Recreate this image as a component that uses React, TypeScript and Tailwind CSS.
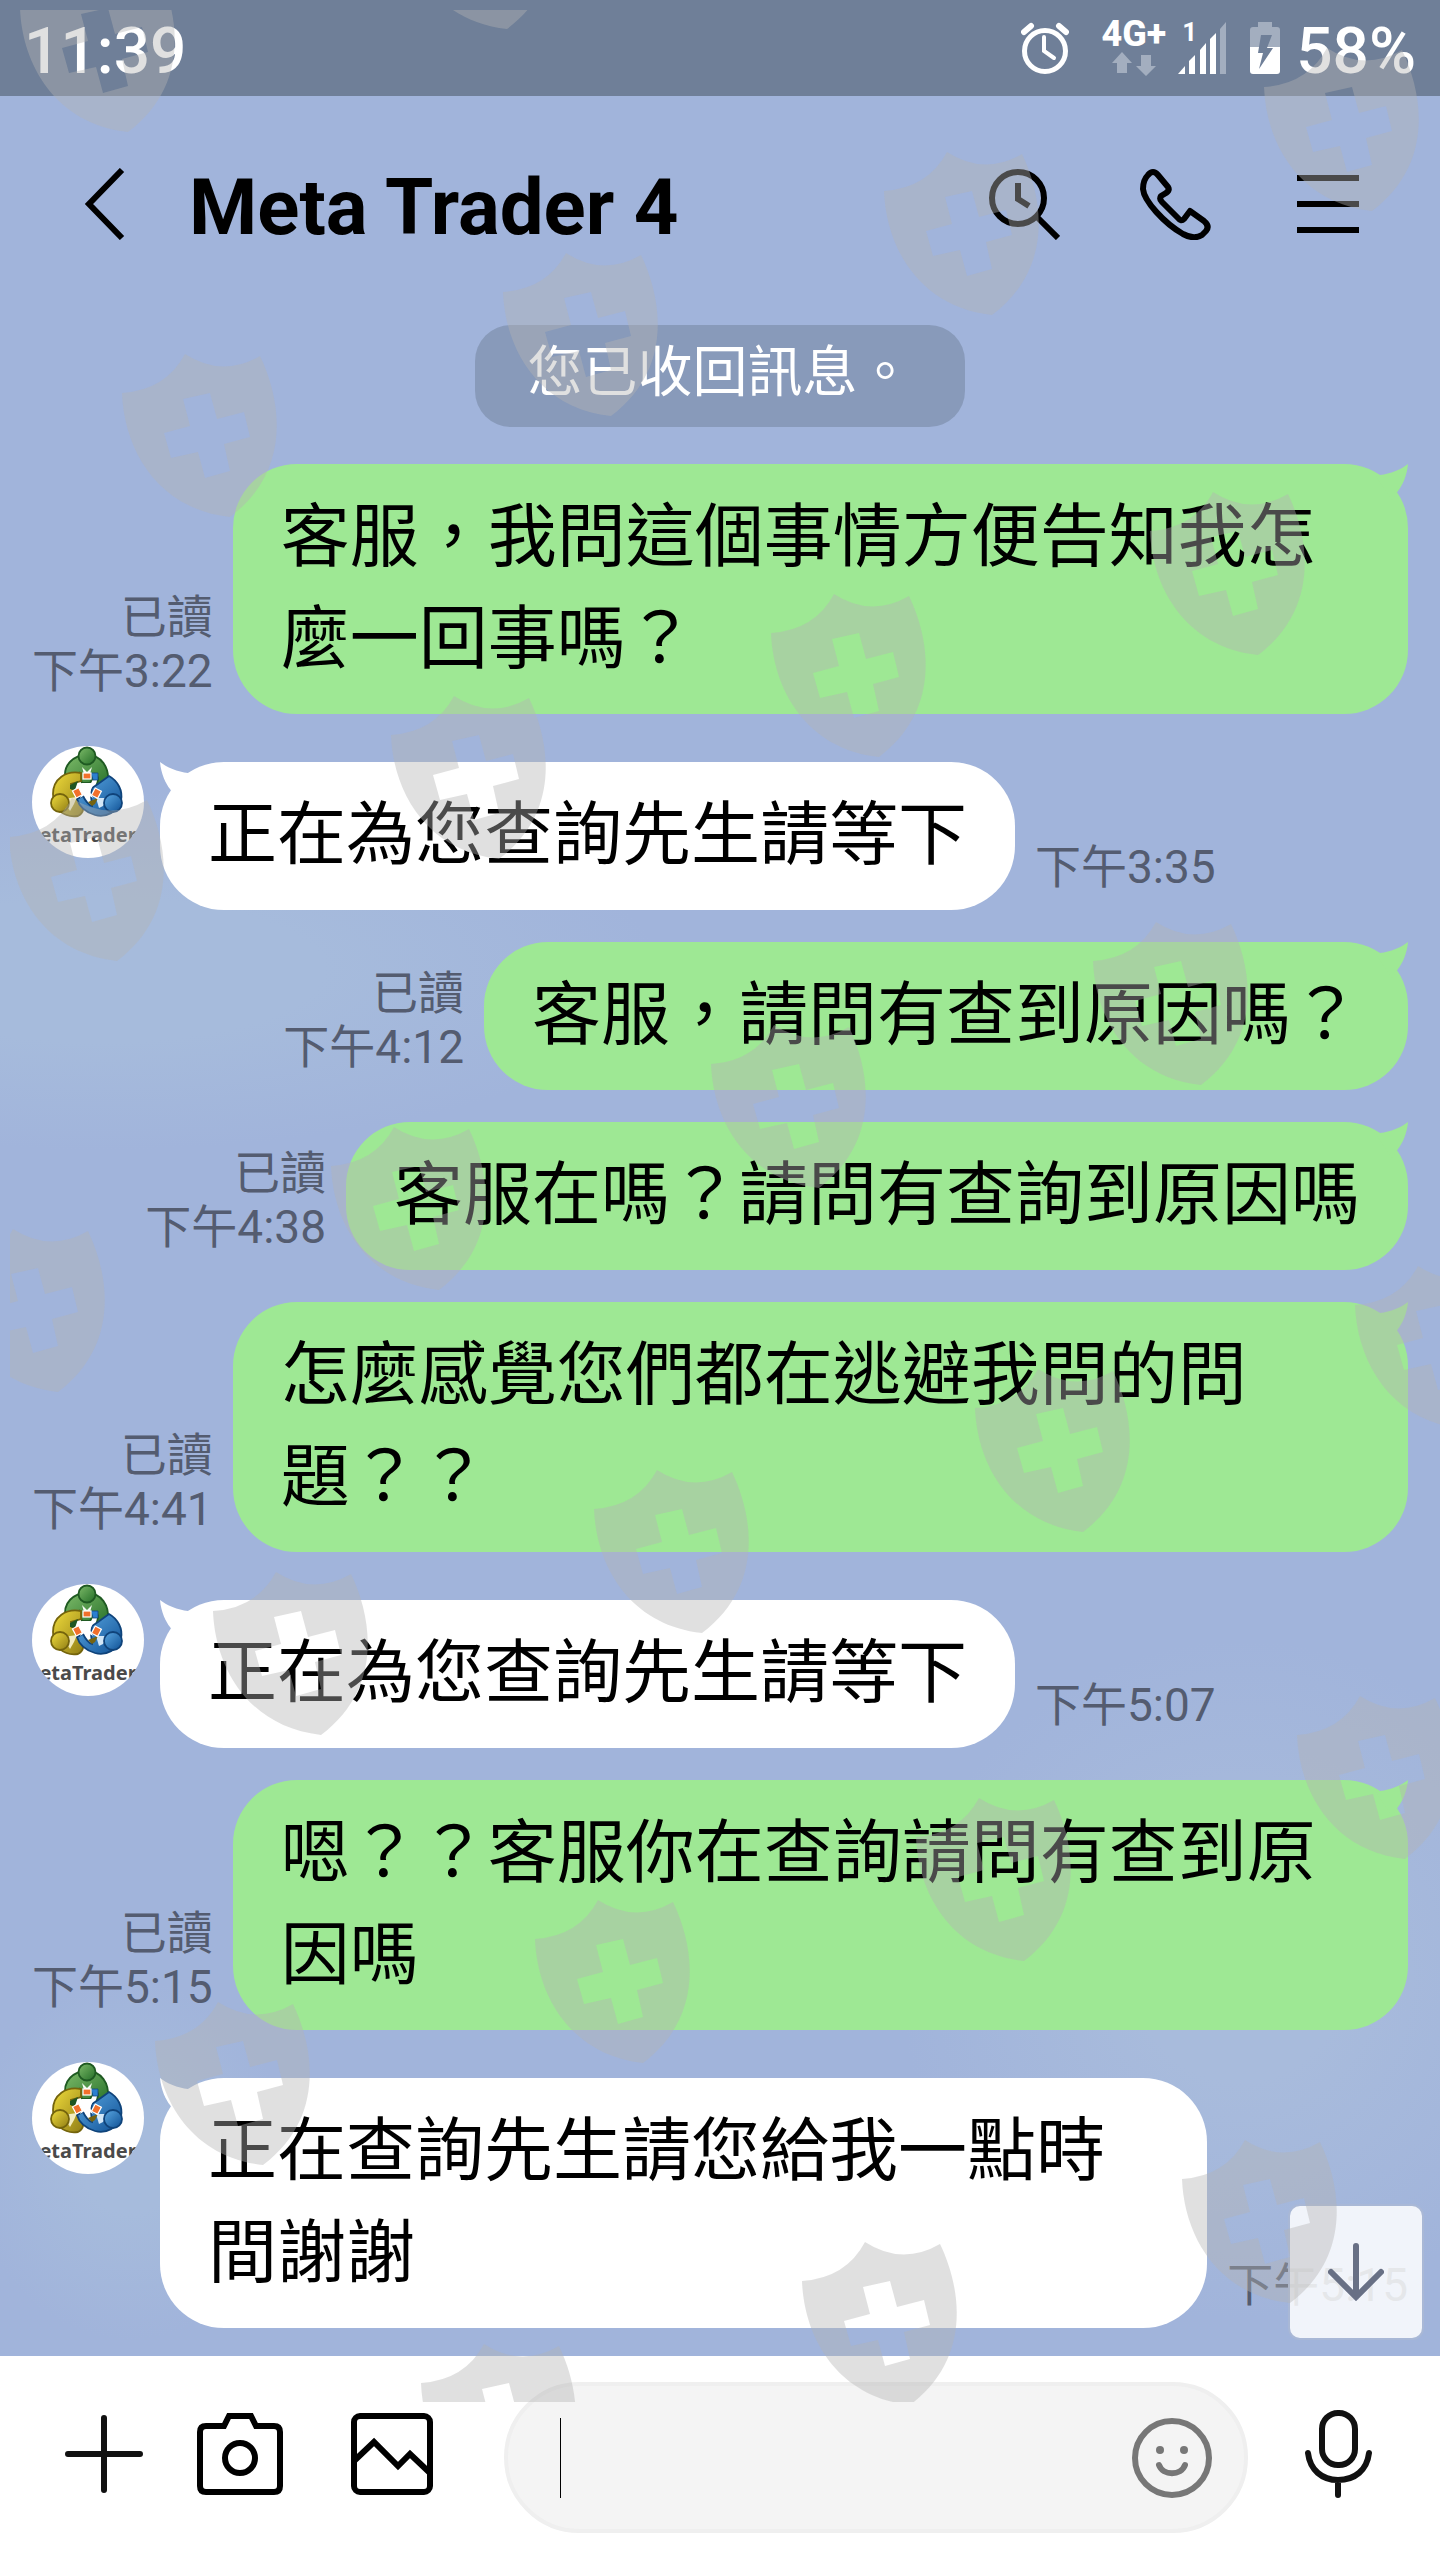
import { useState } from "react";

type Message = {
  id: number;
  mine: boolean;
  text: string;
  time: string;
};

const messages: Message[] = [
  { id: 1, mine: true, text: "客服，我問這個事情方便告知我怎麼一回事嗎？", time: "下午3:22" },
  { id: 2, mine: false, text: "正在為您查詢先生請等下", time: "下午3:35" },
  { id: 3, mine: true, text: "客服，請問有查到原因嗎？", time: "下午4:12" },
  { id: 4, mine: true, text: "客服在嗎？請問有查詢到原因嗎", time: "下午4:38" },
  { id: 5, mine: true, text: "怎麼感覺您們都在逃避我問的問題？？", time: "下午4:41" },
  { id: 6, mine: false, text: "正在為您查詢先生請等下", time: "下午5:07" },
  { id: 7, mine: true, text: "嗯？？客服你在查詢請問有查到原因嗎", time: "下午5:15" },
  { id: 8, mine: false, text: "正在查詢先生請您給我一點時間謝謝", time: "下午5:15" },
];

// top-left corner of every shield stamp
const shields = [
  [20, -31], [399, -134],
  [122, 354], [503, 253], [884, 152], [1264, 48],
  [9, 798], [391, 696], [771, 594], [1150, 492],
  [-50, 1229], [331, 1127], [711, 1025], [1093, 922],
  [213, 1572], [594, 1470], [975, 1369], [1355, 1266],
  [155, 2002], [535, 1900], [916, 1798], [1297, 1696],
  [421, 2344], [802, 2242], [1182, 2140],
];

function Watermark() {
  return (
    <div className="pointer-events-none absolute top-[10px] right-0 bottom-[160px] left-[10px] overflow-hidden" aria-hidden="true">
      <svg className="size-full" fill="#b3b3b3" fillOpacity="0.41" fillRule="evenodd">
        {shields.map(([x, y]) => (
          <path
            key={`${x}-${y}`}
            transform={`translate(${x - 10} ${y - 10})`}
            d="M0 39Q44 36 63 0Q100 24 138 2C161 50 168 118 108 163C35 155 2 95 0 39ZM61 45L88 39L95 65L122 58L128 83L102 90L108 117L83 124L76 98L49 104L42 79L68 72Z"
          />
        ))}
      </svg>
    </div>
  );
}

function Avatar() {
  return (
    <div className="size-28 shrink-0 overflow-hidden rounded-full bg-white">
      <svg viewBox="0 0 112 112" className="size-full">
        <defs>
          <linearGradient id="green" x1="0" y1="0" x2="1" y2="1">
            <stop offset="0" stopColor="#7dbb69" />
            <stop offset="1" stopColor="#236d27" />
          </linearGradient>
          <linearGradient id="yellow" x1="0" y1="0" x2="1" y2="1">
            <stop offset="0" stopColor="#f0dc3c" />
            <stop offset="1" stopColor="#8f7c14" />
          </linearGradient>
          <linearGradient id="blue" x1="0" y1="0" x2="1" y2="1">
            <stop offset="0" stopColor="#5ba8e2" />
            <stop offset="1" stopColor="#0e4f94" />
          </linearGradient>
        </defs>
        <g strokeWidth="1.8">
          <path d="M34 36C29 18 43 9 55 9C70 9 77 22 76 35C75 41 73 44 70 45C66 45 63 42 65 38C67 32 66 30 63 28L58 37L50 37L47 27Z" fill="url(#green)" stroke="#1f5a22" />
          <path d="M50 21L55 26L60 21L58 28H52Z" fill="#f4faf2" stroke="none" />
          <path d="M49 27C34 24 21 33 21 48C21 63 32 72 46 70C52 67 53 60 50 50L46 45L40 43L39 38L49 35Z" fill="url(#yellow)" stroke="#74640c" />
          <path d="M31 53L45 51L42 58L38 65Z" fill="#f3ecc0" stroke="none" />
          <path d="M77 30C86 35 91 45 89 54C86 66 74 72 63 69C53 66 47 60 45 53L51 50C54 56 57 59 60 60L59 50L60 42L66 38Z" fill="url(#blue)" stroke="#0f437a" />
          <path d="M64 52L76 52L71 60L67 62Z" fill="#d4e8f8" stroke="none" />
          <path d="M38 39L46 35L43 44L38 43Z" fill="#1f5522" stroke="none" />
          <path d="M56 56L66 52L63 58L60 60Z" fill="#756310" stroke="none" />
          <circle cx="55" cy="10" r="8.5" fill="url(#green)" stroke="#1f5a22" />
          <circle cx="28" cy="57" r="9" fill="url(#yellow)" stroke="#74640c" />
          <circle cx="81" cy="57" r="9" fill="url(#blue)" stroke="#0f437a" />
        </g>
        <path d="M49 37L62 37L58 46L61 52L54 48L48 52L51 45Z" fill="#fff" />
        <path d="M59 27h7v7h-5z" fill="#2b7fd0" stroke="#12477c" strokeWidth="0.8" />
        <g fill="#f2702c" stroke="#fff" strokeWidth="1.2">
          <rect x="51" y="27" width="8" height="6" />
          <rect x="42" y="43" width="7" height="8" transform="rotate(-28 45 47)" />
          <rect x="61" y="43" width="7" height="8" transform="rotate(28 64 47)" />
        </g>
        <text x="56" y="96" textAnchor="middle" fontSize="20" fontWeight="700" fill="#4a4a4a" className="font-['Noto_Sans',sans-serif]">
          etaTrader
        </text>
      </svg>
    </div>
  );
}

function Bubble({ mine, text }: { mine: boolean; text: string }) {
  return (
    <div
      className={`relative min-w-0 rounded-[64px] px-12 py-[23px] text-[69px] leading-[102px] text-black ${
        mine ? "bg-[#9ee894]" : "mt-4 bg-white"
      }`}
    >
      <svg
        viewBox="0 0 32 36"
        className={`absolute top-0 h-9 w-8 ${mine ? "right-0 fill-[#9ee894]" : "left-0 -scale-x-100 fill-white"}`}
      >
        <path d="M32 0C31 12 26 22 22 27L16 36L0 12L4 11C14 10 26 5 32 0Z" />
      </svg>
      <p className="break-all">{text}</p>
    </div>
  );
}

function MessageRow({ message }: { message: Message }) {
  const { mine, text, time } = message;
  return (
    <li className={`flex ${mine ? "justify-end gap-5" : "items-start"}`}>
      {!mine && (
        <div className="mr-4 shrink-0">
          <Avatar />
        </div>
      )}
      {!mine && <Bubble mine={mine} text={text} />}
      <div className={`mb-4 shrink-0 self-end text-[46px] leading-[54px] text-[#545c70] ${mine ? "text-right" : "ml-5"}`}>
        {mine && <p>已讀</p>}
        <p>{time}</p>
      </div>
      {mine && <Bubble mine={mine} text={text} />}
    </li>
  );
}

function StatusBar() {
  return (
    <div className="flex h-24 items-center justify-between bg-[#6f7f98] px-6 text-[64px] leading-none font-medium text-white">
      <span className="pt-2">11:39</span>
      <div className="flex items-center">
        <svg viewBox="0 0 48 52" className="mr-8 h-[52px] w-12" fill="none" stroke="#fff" strokeWidth="5">
          <circle cx="24" cy="29" r="20.5" />
          <path d="M23 15V29L33 36" strokeWidth="4" strokeLinecap="round" />
          <path d="M3 10L10 4M45 10L38 4" strokeWidth="6" strokeLinecap="round" />
        </svg>
        <div className="mr-3 flex flex-col items-center gap-1">
          <span className="text-[36px] leading-7 font-extrabold">4G+</span>
          <svg viewBox="0 0 44 24" className="h-6 w-11" fill="#a3aebf">
            <path d="M10 0L20 11H15V21H5V11H0Z" />
            <path d="M34 24L44 14H39V3H29V14H24Z" />
          </svg>
        </div>
        <div className="relative mr-6">
          <svg viewBox="0 0 48 52" className="h-[52px] w-12" fill="#fff">
            <path d="M0 52L7 44V52Z" />
            <path d="M11 39L17 33V52H11Z" />
            <path d="M22 28L28 21V52H22Z" />
            <path d="M32 17L38 11V52H32Z" />
            <path d="M42 7L48 0V52H42Z" fill="#a3aebf" />
          </svg>
          <span className="absolute top-0 left-1 text-[26px] leading-5 font-bold">1</span>
        </div>
        <svg viewBox="0 0 30 52" className="mr-4 h-[52px] w-[30px]">
          <path d="M8 0H22V5H27Q30 5 30 8V25H0V8Q0 5 3 5H8Z" fill="#a3aebf" />
          <path d="M0 25H30V49Q30 52 27 52H3Q0 52 0 49Z" fill="#fff" />
          <path d="M11 13H22L17 26H23L9 47L13 31H8Z" fill="#6f7f98" />
        </svg>
        <span className="pt-2">58%</span>
      </div>
    </div>
  );
}

function ChatHeader() {
  return (
    <header className="flex items-center px-[81px] pt-[60px] pb-12">
      <button type="button" aria-label="Back" className="mr-16 shrink-0">
        <svg viewBox="0 0 44 72" className="h-[72px] w-11" fill="none" stroke="#000" strokeWidth="6">
          <path d="M41 2L8 36L41 70" />
        </svg>
      </button>
      <h1 className="flex-1 pt-2 text-[78px] leading-[88px] font-bold text-black">Meta Trader 4</h1>
      <div className="flex shrink-0 items-center">
        <button type="button" aria-label="Search" className="mr-20">
          <svg viewBox="0 0 72 72" className="size-[72px]" fill="none" stroke="#000" strokeWidth="6">
            <circle cx="30" cy="30" r="26" />
            <path d="M49 49L70 70" />
            <path d="M30 15V31L41 38" />
          </svg>
        </button>
        <button type="button" aria-label="Call" className="mr-[86px]">
          <svg viewBox="0 0 71 71" className="size-[71px]" fill="none" stroke="#000" strokeWidth="6" strokeLinejoin="round">
            <path d="M8 6Q13 0 18 6L28 18Q30 21 26 24L21 27Q19 30 22 33L38 49Q41 53 44 50L50 42L64 52Q70 57 66 62L62 66Q54 71 43 65C24 54 4 32 3 20Q3 11 8 6Z" />
          </svg>
        </button>
        <button type="button" aria-label="Menu">
          <svg viewBox="0 0 62 58" className="h-[58px] w-[62px]" stroke="#000" strokeWidth="6">
            <path d="M0 3H62M0 29H62M0 55H62" />
          </svg>
        </button>
      </div>
    </header>
  );
}

function Composer() {
  const [draft, setDraft] = useState("");

  return (
    <footer className="flex items-center bg-white pt-[26px] pr-[68px] pb-[29px] pl-[65px]">
      <button type="button" aria-label="Add" className="mr-[54px] shrink-0 pb-2">
        <svg viewBox="0 0 78 78" className="size-[78px]" stroke="#111" strokeWidth="6" strokeLinecap="round">
          <path d="M39 3V75M3 39H75" />
        </svg>
      </button>
      <button type="button" aria-label="Camera" className="mr-[68px] shrink-0 pb-2">
        <svg viewBox="0 0 86 82" className="h-[82px] w-[86px]" fill="none" stroke="#000" strokeWidth="6">
          <path d="M9 13H27L32 3H54L59 13H77Q83 13 83 19V73Q83 79 77 79H9Q3 79 3 73V19Q3 13 9 13Z" />
          <circle cx="43" cy="45" r="15" />
        </svg>
      </button>
      <button type="button" aria-label="Photos" className="mr-[71px] shrink-0 pb-2">
        <svg viewBox="0 0 82 82" className="size-[82px]" fill="none" stroke="#000" strokeWidth="6">
          <rect x="3" y="3" width="76" height="76" rx="6" />
          <path d="M3 48L23 29L47 53L59 41L79 60" />
        </svg>
      </button>
      <div className="mr-[57px] flex h-[151px] min-w-0 flex-1 items-center rounded-full border-4 border-[#efefef] bg-[#f4f4f4] pr-[32px] pl-[52px]">
        <span className="h-20 w-px shrink-0 bg-black" />
        <input
          aria-label="Message"
          value={draft}
          onChange={(e) => setDraft(e.target.value)}
          className="min-w-0 flex-1 bg-transparent text-[56px] text-black outline-none"
        />
        <button type="button" aria-label="Stickers" className="shrink-0">
          <svg viewBox="0 0 80 80" className="size-20" fill="none" stroke="#777" strokeWidth="6">
            <circle cx="40" cy="40" r="37" />
            <path d="M27 47C31 58 49 58 53 47" strokeLinecap="round" />
            <circle cx="28" cy="32" r="4" fill="#777" stroke="none" />
            <circle cx="52" cy="32" r="4" fill="#777" stroke="none" />
          </svg>
        </button>
      </div>
      <button type="button" aria-label="Voice message" className="shrink-0 pb-2">
        <svg viewBox="0 0 67 88" className="h-[88px] w-[67px]" fill="none" stroke="#111" strokeWidth="6" strokeLinecap="round">
          <rect x="17" y="3" width="33" height="52" rx="16" />
          <path d="M3 43C5 60 17 70 33 70C50 70 62 60 64 43M33 71V85" />
        </svg>
      </button>
    </footer>
  );
}

export default function App() {
  return (
    <div className="relative flex min-h-screen w-full flex-col overflow-hidden bg-[#a1b4db] bg-[radial-gradient(ellipse_560px_180px_at_100px_970px,#a6bbdc_40%,transparent),radial-gradient(ellipse_340px_340px_at_1240px_1980px,#a8bbdc_30%,transparent),radial-gradient(ellipse_160px_180px_at_130px_2160px,#a6bbdc_30%,transparent)] font-[Roboto,'Noto_Sans_CJK_TC',sans-serif]">
      <StatusBar />
      <ChatHeader />
      <main className="relative flex-1 px-8 pt-[25px] pb-7">
        <p className="mx-auto mb-[37px] w-fit rounded-[36px] bg-[#889aba] px-[52px] pt-1.5 pb-3.5 text-[55px] leading-[82px] text-white">
          您已收回訊息。
        </p>
        <ul className="flex flex-col gap-8">
          {messages.map((message) => (
            <MessageRow key={message.id} message={message} />
          ))}
        </ul>
        <button
          type="button"
          aria-label="Scroll to latest"
          className="absolute right-4 bottom-4 flex size-[136px] items-center justify-center rounded-xl border-2 border-[#a9b8d6] bg-white/85"
        >
          <svg viewBox="0 0 56 58" className="h-[58px] w-14" fill="none" stroke="#687085" strokeWidth="6" strokeLinecap="round">
            <path d="M28 3V54M3 29L28 54L53 29" />
          </svg>
        </button>
      </main>
      <Composer />
      <Watermark />
    </div>
  );
}
